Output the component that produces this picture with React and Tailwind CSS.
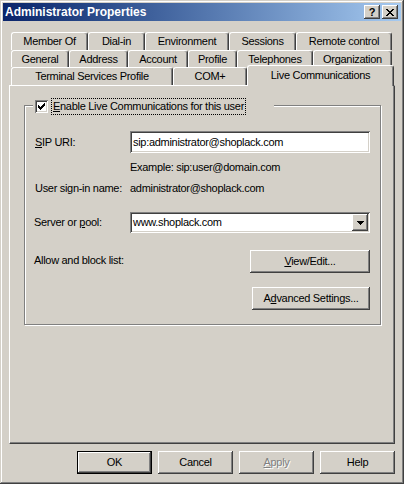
import clsx from "clsx";

const font = "font-['Liberation_Sans',Arial,sans-serif] text-[11px] leading-[13px] tracking-[-0.3px] text-black";
const raised =
  "shadow-[inset_-1px_-1px_#404040,inset_1px_1px_#ffffff,inset_-2px_-2px_#808080,inset_2px_2px_#d4d0c8]";
const sunken =
  "shadow-[inset_1px_1px_#808080,inset_-1px_-1px_#ffffff,inset_2px_2px_#404040,inset_-2px_-2px_#d4d0c8]";

// tab rows, top to bottom
const tabRows = [
  {
    h: "h-[18px]",
    tabs: [
      { label: "Member Of", w: "w-[77px]" },
      { label: "Dial-in", w: "w-[57px]" },
      { label: "Environment", w: "w-[84px]" },
      { label: "Sessions", w: "w-[67px]" },
      { label: "Remote control", w: "w-[96px]" },
    ],
  },
  {
    h: "h-[17px]",
    tabs: [
      { label: "General", w: "w-[58px]" },
      { label: "Address", w: "w-[59px]" },
      { label: "Account", w: "w-[60px]" },
      { label: "Profile", w: "w-[49px]" },
      { label: "Telephones", w: "w-[76px]" },
      { label: "Organization", w: "w-[79px]" },
    ],
  },
  {
    h: "h-[18px]",
    tabs: [
      { label: "Terminal Services Profile", w: "w-[162px]" },
      { label: "COM+", w: "w-[74px]" },
      { label: "Live Communications", w: "w-[147px]", selected: true },
    ],
  },
];

const Tab = ({ label, w, selected }) => (
  <div
    className={clsx(
      "flex items-center justify-center rounded-t-[3px] border-l border-t border-r border-white border-r-[#404040] bg-[#d4d0c8] shadow-[inset_-1px_0_#808080]",
      w,
      selected ? "relative z-10 -mb-px h-[21px] pb-px" : "h-full"
    )}
  >
    {label}
  </div>
);

const Button = ({ children, className, isDefault }) => (
  <div
    className={clsx(
      "flex h-[23px] items-center justify-center bg-[#d4d0c8]",
      raised,
      isDefault && "border border-black",
      className
    )}
  >
    {children}
  </div>
);

const CheckMark = () => (
  <svg width="7" height="7" viewBox="0 0 7 7" shapeRendering="crispEdges">
    {[2, 3, 4, 3, 2, 1, 0].map((y, x) => (
      <rect key={x} x={x} y={y} width="1" height="3" fill="#000" />
    ))}
  </svg>
);

const DownArrow = () => (
  <svg width="7" height="4" viewBox="0 0 7 4" shapeRendering="crispEdges">
    <rect x="0" y="0" width="7" height="1" fill="#000" />
    <rect x="1" y="1" width="5" height="1" fill="#000" />
    <rect x="2" y="2" width="3" height="1" fill="#000" />
    <rect x="3" y="3" width="1" height="1" fill="#000" />
  </svg>
);

const CloseGlyph = () => (
  <svg width="8" height="7" viewBox="0 0 8 7" shapeRendering="crispEdges">
    {[0, 1, 2, 3, 2, 1, 0].map((x, y) => (
      <g key={y}>
        <rect x={x} y={y} width="2" height="1" fill="#000" />
        <rect x={6 - x} y={y} width="2" height="1" fill="#000" />
      </g>
    ))}
  </svg>
);

export default function App() {
  return (
    <div
      className={clsx(
        "flex h-[484px] w-[404px] flex-col bg-[#d4d0c8] p-[3px] shadow-[inset_-1px_-1px_#404040,inset_1px_1px_#d4d0c8,inset_-2px_-2px_#808080,inset_2px_2px_#ffffff]",
        font
      )}
    >
      {/* title bar */}
      <div className="flex h-[18px] items-center bg-gradient-to-r from-[#0a246a] to-[#a6caf0] pl-[2px] pr-[3px]">
        <span className="flex-1 text-[12px] font-bold tracking-normal text-white">
          Administrator Properties
        </span>
        <div className="flex gap-[2px]">
          <div className={clsx("flex h-[14px] w-[16px] items-center justify-center bg-[#d4d0c8] text-[11px] font-bold leading-none", raised)}>
            ?
          </div>
          <div className={clsx("flex h-[14px] w-[16px] items-center justify-center bg-[#d4d0c8]", raised)}>
            <CloseGlyph />
          </div>
        </div>
      </div>

      {/* tabs */}
      <div className="ml-[8px] mt-[11px] flex flex-col">
        {tabRows.map((row, i) => (
          <div key={i} className={clsx("flex", row.h, row.tabs.some((t) => t.selected) && "items-end")}>
            {row.tabs.map((t) => (
              <Tab key={t.label} {...t} />
            ))}
          </div>
        ))}
      </div>

      {/* panel */}
      <div className="ml-[6px] h-[359px] w-[386px] border-b border-l border-r border-t border-white border-b-[#404040] border-r-[#404040] shadow-[inset_-1px_-1px_#808080]">
        <div className="ml-[14px] mt-[19px] flex h-[220px] w-[357px] flex-col border border-[#808080] shadow-[1px_1px_#ffffff,inset_1px_1px_#ffffff]">
          {/* legend */}
          <div className="-mt-[8px] ml-[8px] flex h-[17px] w-[241px] items-center bg-[#d4d0c8]">
            <div className={clsx("ml-[2px] flex h-[13px] w-[13px] items-center justify-center bg-white", sunken)}>
              <CheckMark />
            </div>
            <div className="ml-[3px] border border-dotted border-black px-[1px] py-px">
              <u>E</u>nable Live Communications for this user
            </div>
          </div>

          <div className="ml-[10px] mt-[16px] flex items-center">
            <span className="w-[95px]">
              <u>S</u>IP URI:
            </span>
            <div className={clsx("flex h-[22px] w-[240px] items-center bg-white pl-[3px]", sunken)}>
              sip:administrator@shoplack.com
            </div>
          </div>

          <div className="ml-[105px] mt-[8px]">Example: sip:user@domain.com</div>

          <div className="ml-[10px] mt-[8px] flex">
            <span className="w-[95px]">User sign-in name:</span>
            <span>administrator@shoplack.com</span>
          </div>

          <div className="ml-[9px] mt-[17px] flex items-center">
            <span className="w-[96px]">
              Server or <u>p</u>ool:
            </span>
            <div className={clsx("flex h-[21px] w-[240px] items-center bg-white p-[2px] pl-[3px]", sunken)}>
              <span className="flex-1">www.shoplack.com</span>
              <div className={clsx("flex h-[17px] w-[16px] items-center justify-center bg-[#d4d0c8] pt-px", raised)}>
                <DownArrow />
              </div>
            </div>
          </div>

          <div className="ml-[9px] mr-[10px] mt-[17px] flex">
            <span className="mt-[4px] flex-1">Allow and block list:</span>
            <Button className="w-[120px]">
              <span>
                <u>V</u>iew/Edit...
              </span>
            </Button>
          </div>

          <div className="mr-[10px] mt-[14px] flex justify-end">
            <Button className="w-[118px]">
              <span>
                A<u>d</u>vanced Settings...
              </span>
            </Button>
          </div>
        </div>
      </div>

      {/* dialog buttons */}
      <div className="mt-[7px] flex justify-end gap-[6px] pr-[6px]">
        <Button isDefault className="w-[75px]">
          OK
        </Button>
        <Button className="w-[75px]">Cancel</Button>
        <Button className="w-[75px] text-[#808080] [text-shadow:1px_1px_0_#ffffff]">
          <span>
            <u>A</u>pply
          </span>
        </Button>
        <Button className="w-[75px]">Help</Button>
      </div>
    </div>
  );
}
